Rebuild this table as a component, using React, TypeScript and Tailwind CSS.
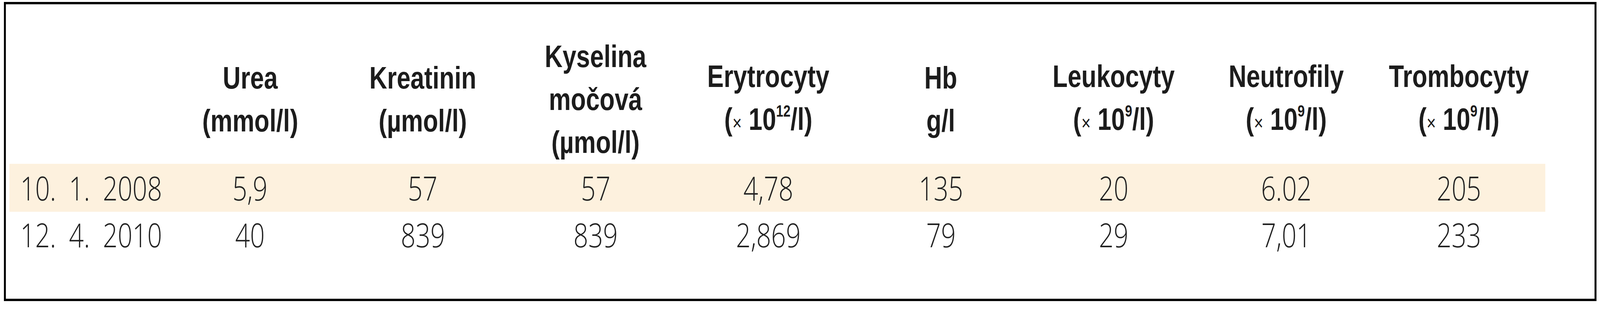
import React from 'react';

// horizontal sizes are in vw so the table keeps the reference's proportions (1vw = 51.8px of the 5180px reference)

const headers: { key: string; lines: React.ReactNode[] }[] = [
  { key: 'urea', lines: ['Urea', '(mmol/l)'] },
  { key: 'krea', lines: ['Kreatinin', '(µmol/l)'] },
  { key: 'kys', lines: ['Kyselina', 'močová', '(µmol/l)'] },
  { key: 'ery', lines: ['Erytrocyty', <Unit key="u" exp="12" />] },
  { key: 'hb', lines: ['Hb', 'g/l'] },
  { key: 'leu', lines: ['Leukocyty', <Unit key="u" exp="9" />] },
  { key: 'neu', lines: ['Neutrofily', <Unit key="u" exp="9" />] },
  { key: 'tro', lines: ['Trombocyty', <Unit key="u" exp="9" />] },
];

const rows = [
  { date: '10. 1. 2008', values: ['5,9', '57', '57', '4,78', '135', '20', '6.02', '205'], highlight: true },
  { date: '12. 4. 2010', values: ['40', '839', '839', '2,869', '79', '29', '7,01', '233'], highlight: false },
];

function Unit({ exp }: { exp: string }) {
  return (
    <span>
      (<span className="text-[52px] font-normal">×</span> 10
      <sup className="text-[42px] -top-[34px]">{exp}</sup>/l)
    </span>
  );
}

const grid = 'grid w-fit grid-cols-[9.653vw_repeat(8,10.792vw)]';

export default function App() {
  return (
    <div className="w-full h-[800px] bg-white pt-[5px] pl-[0.232vw]">
      <div className="w-[99.54vw] h-[767px] border-x-[5px] border-y-[6px] border-black pt-[79px] pl-[0.232vw]">
        {/* header */}
        <div
          className={`${grid} h-[330px] items-center font-['Liberation_Sans',Arial,sans-serif] font-bold text-[80px] leading-[110px] text-[#1c1c1c]`}
        >
          <div />
          {headers.map((h) => (
            <div key={h.key} className="flex justify-center whitespace-nowrap">
              <div className="flex flex-col items-center text-center scale-x-[0.79]">
                {h.lines.map((line, i) => (
                  <div key={i}>{line}</div>
                ))}
              </div>
            </div>
          ))}
        </div>

        {/* rows */}
        <div className="font-['Open_Sans','Liberation_Sans',sans-serif] font-light text-[84px] leading-none text-[#222]">
          {rows.map((r) => (
            <div
              key={r.date}
              className={`${grid} ${r.highlight ? 'bg-[#fdf1de] h-[123px] pt-[20px]' : 'h-[114px] pt-[17px]'}`}
            >
              <div className="pl-[0.695vw] whitespace-nowrap">
                <span className="inline-block origin-left scale-x-[0.79] [word-spacing:20px]">{r.date}</span>
              </div>
              {r.values.map((v, i) => (
                <div key={i} className="flex justify-center">
                  <span className="inline-block scale-x-[0.79]">{v}</span>
                </div>
              ))}
            </div>
          ))}
        </div>
      </div>
    </div>
  );
}
